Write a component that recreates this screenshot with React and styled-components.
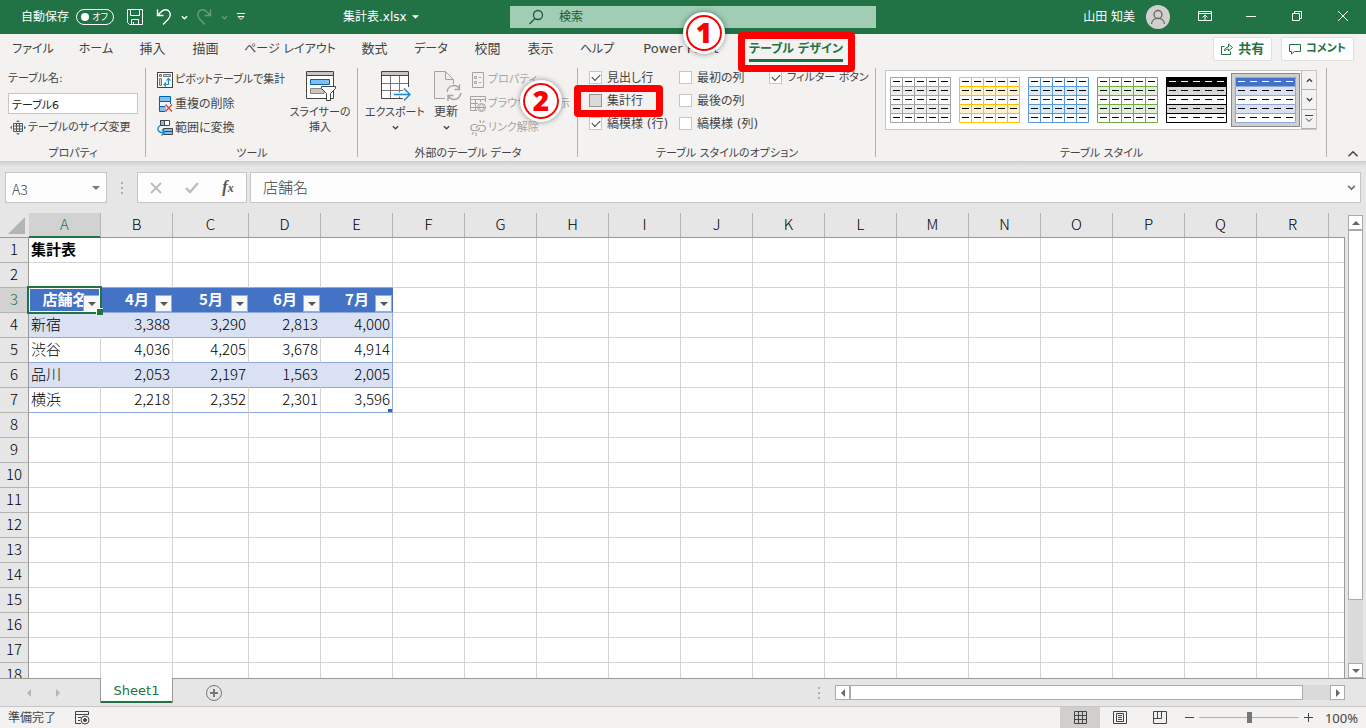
import { useState } from 'react';
import styled, { createGlobalStyle, css } from 'styled-components';

const tabs = [
  { name: 'ファイル', width: 66, kana: true },
  { name: 'ホーム', width: 60, kana: true },
  { name: '挿入', width: 53 },
  { name: '描画', width: 53 },
  { name: 'ページ レイアウト', width: 116, kana: true },
  { name: '数式', width: 53 },
  { name: 'データ', width: 60, kana: true },
  { name: '校閲', width: 53 },
  { name: '表示', width: 53 },
  { name: 'ヘルプ', width: 60, kana: true },
  { name: 'Power Pivot', width: 108 },
  { name: 'テーブル デザイン', width: 122, kana: true, active: true, step: '1' },
];

const options = [
  { id: 'header', name: '見出し行', on: true },
  { id: 'first', name: '最初の列', on: false },
  { id: 'filter', name: 'フィルター ボタン', on: true, kana: true },
  { id: 'total', name: '集計行', on: false, step: '2' },
  { id: 'last', name: '最後の列', on: false },
  { id: 'bandRow', name: '縞模様 (行)', on: true, newLine: true },
  { id: 'bandCol', name: '縞模様 (列)', on: false },
];

const tableStyles = [
  { name: '白', line: '#a5a5a5', head: '#fff', band: '#ededed', grid: true },
  { name: 'ゴールド', line: '#ffc000', head: '#fff', band: '#fff2cc', grid: true },
  { name: '青', line: '#5b9bd5', head: '#fff', band: '#ddebf7', grid: true },
  { name: '緑', line: '#70ad47', head: '#fff', band: '#e2efda', grid: true },
  { name: '黒', line: '#000', head: '#000', band: '#d9d9d9' },
  { name: '濃い青', line: '#8ea9db', head: '#4472c4', band: '#d9e1f2', selected: true },
];

// the last column has no letter, it fills the rest of the sheet
const columns = [...'ABCDEFGHIJKLMNOPQR'.split(''), ''];
const rowNumbers = Array.from({ length: 18 }, (_, i) => i + 1);

const cells = {
  1: ['集計表'],
  3: ['店舗名', '4月', '5月', '6月', '7月'],
  4: ['新宿', '3,388', '3,290', '2,813', '4,000'],
  5: ['渋谷', '4,036', '4,205', '3,678', '4,914'],
  6: ['品川', '2,053', '2,197', '1,563', '2,005'],
  7: ['横浜', '2,218', '2,352', '2,301', '3,596'],
};

const Chevron = ({ up, size = 7 }) => (
  <svg width={size} height={size} viewBox='0 0 8 8' fill='none' stroke='currentColor' strokeWidth={size > 9 ? 1 : 1.5}>
    <path d={up ? 'M1 5.5L4 2.5L7 5.5' : 'M1 2.5L4 5.5L7 2.5'} />
  </svg>
);

const Arrow = ({ dir = 'down' }) => {
  const paths = {
    down: 'M0 2H8L4 6Z',
    up: 'M0 6H8L4 2Z',
    left: 'M6 0V8L2 4Z',
    right: 'M2 0V8L6 4Z',
  };
  return (
    <svg width='8' height='8' viewBox='0 0 8 8' fill='currentColor'>
      <path d={paths[dir]} />
    </svg>
  );
};

const SaveIcon = () => (
  <svg width='16' height='18' viewBox='0 0 16 18' fill='none' stroke='#fff'>
    <path d='M.5 1.5H15.5V16.5H2.5L.5 14.5Z' />
    <path d='M3.5 1.5V7.5H12.5V1.5M4.5 16.5V11.5H11.5V16.5M6.5 16V14' />
  </svg>
);

const UndoIcon = ({ flip }) => (
  <svg width='16' height='18' viewBox='0 0 16 18' fill='none' stroke='#fff' strokeWidth='1.4'>
    <path
      transform={flip ? 'matrix(-1 0 0 1 16 0)' : undefined}
      d='M1.5 1.5V7.5H7.5M1.5 7.5L5.5 3.5C8 1 12 1.2 13.5 4C15 7 14 9.5 12 11.5L7 16.5'
    />
  </svg>
);

const PivotIcon = () => (
  <svg width='16' height='16' viewBox='0 0 16 16' fill='none'>
    <rect x='.5' y='.5' width='15' height='15' fill='#fff' stroke='#444' />
    <path d='M2.5 2.5H4.5V4.5H2.5ZM6.5 2.5H13.5V4.5H6.5ZM2.5 6.5H4.5V13.5H2.5Z' stroke='#777' fill='#d5d5d5' />
    <path d='M11.5 7V12.5H7.5M9.5 8.5L11.5 6.5L13.5 8.5M9 10.5L7 12.5L9 14.5' stroke='#1e8bcd' strokeWidth='1.2' />
  </svg>
);

const DuplicateIcon = () => (
  <svg width='16' height='16' viewBox='0 0 16 16' fill='none'>
    <path d='M2.5 .5H13.5V5H2.5ZM2.5 10H9V15.5H2.5Z' fill='#83beec' />
    <path d='M13.5 8V.5H2.5V15.5H8M2.5 5.5H13.5M2.5 10.5H8' stroke='#0063b1' />
    <path d='M8.5 8.5L15 15.5M15 8.5L8.5 15.5' stroke='#e8433f' strokeWidth='1.4' />
  </svg>
);

const RangeIcon = () => (
  <svg width='16' height='16' viewBox='0 0 16 16' fill='none'>
    <path d='M3.5 .5H12.5V5.5H3.5Z' fill='#fff' stroke='#444' />
    <path d='M3.5 .5H7.5V5.5H3.5Z' fill='#83beec' stroke='#444' />
    <path d='M6.5 8.5H15.5V14.5H6.5Z' fill='#83beec' stroke='#444' />
    <path d='M7 11.5H15' stroke='#444' />
    <path d='M3 5.5C0 8 0 11 4 12.5H7M5 9.5L7.5 12.5L4.5 15.5' stroke='#1e8bcd' strokeWidth='1.4' />
  </svg>
);

const ResizeIcon = () => (
  <svg width='16' height='16' viewBox='0 0 16 16' fill='none'>
    <path d='M3.5 3.5H12.5V11.5H3.5ZM3.5 6H12.5M3.5 9H12.5M6.5 3.5V11.5M9.5 3.5V11.5' stroke='#555' />
    <path d='M8 0L10 2H6ZM8 15L6 13H10ZM0 7.5L2 5.5V9.5ZM16 7.5L14 9.5V5.5Z' fill='#1e8bcd' />
  </svg>
);

const SlicerIcon = () => (
  <svg width='32' height='32' viewBox='0 0 32 32' fill='none'>
    <path d='M2.5 1.5H29.5V28.5H2.5Z' fill='#fff' stroke='#444' />
    <path d='M3 2H29V5H3Z' fill='#c8c6c4' />
    <path d='M2.5 5.5H29.5' stroke='#444' />
    <path d='M6.5 9.5H25.5V14.5H6.5Z' fill='#83beec' stroke='#0063b1' />
    <path d='M6.5 18.5H20V23.5H6.5Z' fill='#c8c6c4' stroke='#8a8886' />
    <path d='M17.5 16.5H31.5V18.5L26.5 23.5V30.5H22.5V23.5L17.5 18.5Z' fill='#fff' stroke='#444' />
  </svg>
);

const ExportIcon = () => (
  <svg width='32' height='32' viewBox='0 0 32 32' fill='none'>
    <path d='M2.5 1.5H29.5V28.5H2.5Z' fill='#fff' />
    <path d='M3 2H29V5H3Z' fill='#c8c6c4' />
    <path d='M11.5 5V28M20.5 5V28M3 13.5H29M3 20.5H29' stroke='#777' />
    <path d='M29.5 17V1.5H2.5V28.5H24M2.5 5.5H29.5' stroke='#444' />
    <path d='M14 24.5H31M25 18.5L31 24.5L25 30.5' stroke='#f3f2f1' strokeWidth='4' />
    <path d='M15 24.5H31M25 18.5L31 24.5L25 30.5' stroke='#1e8bcd' strokeWidth='1.4' />
  </svg>
);

const RefreshIcon = () => (
  <svg width='32' height='32' viewBox='0 0 32 32' fill='none' stroke='#a6a4a2'>
    <path d='M23.5 14V9.5L15.5 1.5H4.5V28.5H15M15.5 1.5V9.5H23.5' fill='#f0eeed' />
    <path
      d='M17 22C17.5 18 20.5 15.5 24 15.5C26.5 15.5 28.5 17 29.5 19M29.5 14.5V19.5H24.5M31 23C30 27 27.5 29.5 24 29.5C21.5 29.5 19.5 28 18 26M18 31V25.5H23.5'
      strokeWidth='1.4'
    />
  </svg>
);

const PropertyIcon = () => (
  <svg width='16' height='16' viewBox='0 0 16 16' fill='none' stroke='#a6a4a2'>
    <path d='M2.5 .5H13.5V15.5H2.5ZM4.5 4.5H6.5V6.5H4.5ZM4.5 9.5H6.5V11.5H4.5ZM9 5.5H11M9 10.5H11' />
  </svg>
);

const BrowserIcon = () => (
  <svg width='16' height='16' viewBox='0 0 16 16' fill='none' stroke='#a6a4a2'>
    <path d='M7 14.5H.5V.5H15.5V6M.5 3.5H15.5M.5 7.5H8M.5 11.5H7M5.5 3.5V14M10.5 3.5V6' />
    <circle cx='11.5' cy='11.5' r='4' />
    <path d='M7.5 11.5H15.5M11.5 7.5C9 10 9 13 11.5 15.5C14 13 14 10 11.5 7.5' />
  </svg>
);

const UnlinkIcon = () => (
  <svg width='16' height='16' viewBox='0 0 16 16' fill='none' stroke='#a6a4a2' strokeWidth='1.2'>
    <path d='M9.5 11.5H12.5C16.5 11 16.5 5.5 12.5 5.5H9C7 5.5 6.5 7 6.5 8.5M6.5 4.5H3.5C0 5 0 10.5 3.5 10.5H6.5C8.5 10.5 9.5 9 9.5 7.5M10.5 3L10 0M12.5 3L14.5 .5M3.5 12L2 14.5M6 12.5V16' />
  </svg>
);

const StyleThumb = ({ look }) => (
  <svg width='61' height='46' viewBox='0 0 61 46' fill='none'>
    <rect width='61' height='46' fill='#fff' />
    <path d='M0 0H61V9H0Z' fill={look.head} />
    <path d='M0 9H61V18H0ZM0 27H61V36H0Z' fill={look.band} />
    <path d='M.5 .5H60.5V45.5H.5ZM0 9.5H61M0 18.5H61M0 27.5H61M0 36.5H61' stroke={look.line} />
    {look.grid && <path d='M12.5 0V46M24.5 0V46M36.5 0V46M48.5 0V46' stroke={look.line} />}
    {[0, 1, 2, 3, 4].map((i) => (
      <path
        key={i}
        d={`M3 ${4.5 + i * 9}H10M15 ${4.5 + i * 9}H22M27 ${4.5 + i * 9}H34M39 ${4.5 + i * 9}H46M51 ${4.5 + i * 9}H58`}
        stroke={i === 0 && !look.grid ? '#fff' : '#000'}
      />
    ))}
  </svg>
);

const App = () => {
  const [checked, setChecked] = useState(options.filter((el) => el.on).map((el) => el.id));
  const [zoom, setZoom] = useState(100);

  const onToggle = (id) => {
    setChecked(checked.includes(id) ? checked.filter((el) => el !== id) : [...checked, id]);
  };

  return (
    <Window>
      <GlobalStyle />
      <TitleBar>
        <QuickAccess>
          <AutoSave>
            自動保存
            <Toggle type='button' role='switch' aria-checked='false'>
              <i />
              オフ
            </Toggle>
          </AutoSave>
          <IconButton type='button' aria-label='上書き保存' $w={26}><SaveIcon /></IconButton>
          <IconButton type='button' aria-label='元に戻す' $w={32}><UndoIcon /></IconButton>
          <IconButton type='button' aria-label='元に戻す一覧' $w={8}><Chevron /></IconButton>
          <IconButton type='button' aria-label='やり直し' $w={32} disabled><UndoIcon flip /></IconButton>
          <IconButton type='button' aria-label='やり直し一覧' $w={8} disabled><Chevron /></IconButton>
          <IconButton type='button' aria-label='ツールバーの設定' $w={26}>
            <svg width='8' height='8' viewBox='0 0 8 8' fill='none' stroke='#fff'>
              <path d='M0 .5H8M1 3.5L4 6.5L7 3.5Z' />
            </svg>
          </IconButton>
          <FileName type='button'>集計表.xlsx <Arrow /></FileName>
        </QuickAccess>
        <Search>
          <svg width='16' height='16' viewBox='0 0 16 16' fill='none' stroke='#185c37' strokeWidth='1.3'>
            <circle cx='10' cy='6' r='4.5' />
            <path d='M7 9.5L1.5 15' />
          </svg>
          <input type='text' aria-label='検索' placeholder='検索' />
        </Search>
        <Account>
          山田 知美
          <svg width='24' height='24' viewBox='0 0 24 24' fill='none' stroke='#666' strokeWidth='1.3'>
            <circle cx='12' cy='12' r='12' fill='#d2d0ce' stroke='none' />
            <circle cx='12' cy='9.5' r='4' />
            <path d='M5.5 19C6 11.5 18 11.5 18.5 19' />
          </svg>
        </Account>
        <IconButton type='button' aria-label='リボンの表示オプション' $w={46}>
          <svg width='14' height='12' viewBox='0 0 14 12' fill='none' stroke='#fff'>
            <path d='M.5 1.5H13.5V10.5H.5ZM.5 3.5H13.5M7 10V5M4.5 7.5L7 5L9.5 7.5' />
          </svg>
        </IconButton>
        <IconButton type='button' aria-label='最小化' $w={46}>
          <svg width='10' height='10' viewBox='0 0 10 10' stroke='#fff'><path d='M0 5.5H10' /></svg>
        </IconButton>
        <IconButton type='button' aria-label='元に戻す (縮小)' $w={46}>
          <svg width='10' height='10' viewBox='0 0 10 10' fill='none' stroke='#fff'>
            <path d='M.5 2.5H7.5V9.5H.5ZM2.5 2V.5H9.5V7.5H8' />
          </svg>
        </IconButton>
        <IconButton type='button' aria-label='閉じる' $w={46}>
          <svg width='10' height='10' viewBox='0 0 10 10' stroke='#fff'><path d='M0 0L10 10M10 0L0 10' /></svg>
        </IconButton>
      </TitleBar>

      <TabBar>
        {tabs.map((tab) => (
          <Tab key={tab.name} type='button' $w={tab.width} $kana={tab.kana} $active={tab.active}>
            <span>{tab.name}</span>
            {tab.step && <TabFrame />}
            {tab.step && <TabStep>{tab.step}</TabStep>}
          </Tab>
        ))}
        <TabActions>
          <ShareButton type='button'>
            <svg width='12' height='12' viewBox='0 0 12 12' fill='none' stroke='#217346'>
              <path d='M3.5 3.5H.5V11.5H9.5V8.5M3.5 8C3.5 5.5 5 4 7.5 4V1L11.5 4.5L7.5 8V6C5.5 6 4.5 6.5 3.5 8Z' />
            </svg>
            共有
          </ShareButton>
          <ShareButton type='button' $kana>
            <svg width='12' height='12' viewBox='0 0 12 12' fill='none' stroke='#217346'>
              <path d='M.5 1.5H11.5V8.5H5.5L2.5 11V8.5H.5Z' />
            </svg>
            コメント
          </ShareButton>
        </TabActions>
      </TabBar>

      <Ribbon>
        <Group $w={146}>
          <PropertyBody>
            <label htmlFor='table-name'>テーブル名:</label>
            <input id='table-name' defaultValue='テーブル6' />
            <SmallButton type='button' $kana><ResizeIcon />テーブルのサイズ変更</SmallButton>
          </PropertyBody>
          <GroupName>プロパティ</GroupName>
        </Group>

        <Group $w={212}>
          <GroupBody>
            <SmallColumn $left={11}>
              <SmallButton type='button' $kana><PivotIcon />ピボットテーブルで集計</SmallButton>
              <SmallButton type='button'><DuplicateIcon />重複の削除</SmallButton>
              <SmallButton type='button'><RangeIcon />範囲に変換</SmallButton>
            </SmallColumn>
            <BigButton type='button' $w={76} $kana>
              <SlicerIcon />
              <span>スライサーの<br />挿入</span>
            </BigButton>
          </GroupBody>
          <GroupName>ツール</GroupName>
        </Group>

        <Group $w={220}>
          <GroupBody>
            <BigButton type='button' $w={74} $kana>
              <ExportIcon />
              <span>エクスポート</span>
              <Chevron />
            </BigButton>
            <BigButton type='button' $w={28}>
              <RefreshIcon />
              <span>更新</span>
              <Chevron />
            </BigButton>
            <SmallColumn $left={10}>
              <SmallButton type='button' $kana disabled><PropertyIcon />プロパティ</SmallButton>
              <SmallButton type='button' $kana disabled><BrowserIcon />ブラウザーで表示</SmallButton>
              <SmallButton type='button' $kana disabled><UnlinkIcon />リンク解除</SmallButton>
            </SmallColumn>
          </GroupBody>
          <GroupName>外部のテーブル データ</GroupName>
        </Group>

        <Group $w={298}>
          <OptionGrid>
            {options.map((el) => (
              <Option key={el.id} $newLine={el.newLine} $marked={el.step} $kana={el.kana}>
                <input type='checkbox' checked={checked.includes(el.id)} onChange={() => onToggle(el.id)} />
                {el.name}
                {el.step && <OptionFrame />}
                {el.step && <OptionStep>{el.step}</OptionStep>}
              </Option>
            ))}
          </OptionGrid>
          <GroupName>テーブル スタイルのオプション</GroupName>
        </Group>

        <Group $grow>
          <GroupBody>
            <Gallery>
              {tableStyles.map((look) => (
                <StyleButton key={look.name} type='button' aria-label={look.name} $selected={look.selected}>
                  <StyleThumb look={look} />
                </StyleButton>
              ))}
              <GalleryNav>
                <button type='button' aria-label='前の行'><Chevron up /></button>
                <button type='button' aria-label='次の行'><Chevron /></button>
                <button type='button' aria-label='その他'>
                  <svg width='8' height='8' viewBox='0 0 8 8' fill='none' stroke='currentColor'>
                    <path d='M0 .5H8M1 3.5L4 6.5L7 3.5' />
                  </svg>
                </button>
              </GalleryNav>
            </Gallery>
          </GroupBody>
          <GroupName>テーブル スタイル</GroupName>
        </Group>
        <Collapse type='button' aria-label='リボンを折りたたむ'><Chevron up size={12} /></Collapse>
      </Ribbon>

      <FormulaBar>
        <NameBox>
          <input aria-label='名前ボックス' defaultValue='A3' />
          <button type='button' aria-label='名前の一覧'><Arrow /></button>
        </NameBox>
        <Dots><i /><i /><i /></Dots>
        <FormulaButtons>
          <button type='button' aria-label='キャンセル'>
            <svg width='12' height='12' viewBox='0 0 12 12' stroke='#bcbcbc' strokeWidth='2'><path d='M1 1L11 11M11 1L1 11' /></svg>
          </button>
          <button type='button' aria-label='入力'>
            <svg width='14' height='12' viewBox='0 0 14 12' fill='none' stroke='#bcbcbc' strokeWidth='2.4'><path d='M1 6L5 10L13 1' /></svg>
          </button>
          <button type='button' aria-label='関数の挿入'><em>f<small>x</small></em></button>
        </FormulaButtons>
        <FormulaInput>
          <input aria-label='数式バー' defaultValue='店舗名' />
          <button type='button' aria-label='数式バーの展開'><Chevron size={9} /></button>
        </FormulaInput>
      </FormulaBar>

      <Main>
        <SheetView>
          <Sheet>
            <colgroup>
              <Col $w={29} />
              {columns.map((name) => <Col key={name} $w={name === 'C' ? 76 : name && 72} />)}
            </colgroup>
            <thead>
              <tr>
                <Corner aria-label='すべて選択'>
                  <svg width='17' height='17' viewBox='0 0 17 17'><path d='M17 0V17H0Z' fill='#b4b4b4' /></svg>
                </Corner>
                {columns.map((name) => <ColHead key={name} $selected={name === 'A'}>{name}</ColHead>)}
              </tr>
            </thead>
            <tbody>
              {rowNumbers.map((row) => (
                <tr key={row}>
                  <RowHead $selected={row === 3}>{row}</RowHead>
                  {columns.map((name, i) => {
                    const inTable = row > 2 && row < 8 && i < 5;
                    const text = cells[row]?.[i];
                    if (row === 3 && inTable) {
                      return (
                        <HeadCell key={name}>
                          {text}
                          <FilterButton type='button' aria-label={`${text}のフィルター`}><Arrow /></FilterButton>
                          {i === 0 && <Cursor />}
                        </HeadCell>
                      );
                    }
                    return (
                      <Cell
                        key={name}
                        $title={row === 1 && i === 0}
                        $number={i > 0}
                        $band={inTable && row % 2 === 0}
                        $lined={inTable || (row === 2 && i < 5)}
                        $edge={inTable && i === 4}
                        $corner={row === 7 && i === 4}
                      >
                        {text}
                      </Cell>
                    );
                  })}
                </tr>
              ))}
            </tbody>
          </Sheet>
        </SheetView>
        <VerticalScroll>
          <ScrollButton type='button' aria-label='上へ'><Arrow dir='up' /></ScrollButton>
          <VerticalThumb />
          <ScrollButton type='button' aria-label='下へ'><Arrow dir='down' /></ScrollButton>
        </VerticalScroll>
      </Main>

      <SheetBar>
        <SheetNav>
          <button type='button' aria-label='前のシート'><Arrow dir='left' /></button>
          <button type='button' aria-label='次のシート'><Arrow dir='right' /></button>
        </SheetNav>
        <SheetTab type='button'>Sheet1</SheetTab>
        <AddSheet type='button' aria-label='新しいシート'>
          <svg width='16' height='16' viewBox='0 0 16 16' fill='none' stroke='#777'>
            <circle cx='8' cy='8' r='7.5' />
            <path d='M8 4V12M4 8H12' strokeWidth='2' />
          </svg>
        </AddSheet>
        <BarDots><i /><i /><i /></BarDots>
        <HorizontalScroll>
          <ScrollButton type='button' aria-label='左へ'><Arrow dir='left' /></ScrollButton>
          <HorizontalThumb />
          <ScrollButton type='button' aria-label='右へ'><Arrow dir='right' /></ScrollButton>
        </HorizontalScroll>
      </SheetBar>

      <StatusBar>
        <Status>準備完了</Status>
        <svg width='15' height='14' viewBox='0 0 15 14' fill='none' stroke='#444'>
          <path d='M6 12.5H.5V.5H13.5V4M.5 3.5H13.5M3 6.5H6M3 9.5H5' />
          <circle cx='10' cy='9' r='4' />
          <circle cx='10' cy='9' r='1.5' fill='#444' />
        </svg>
        <Views>
          <ViewButton type='button' aria-label='標準' $active>
            <svg width='13' height='13' viewBox='0 0 13 13' fill='none' stroke='#444'>
              <path d='M.5 .5H12.5V12.5H.5ZM.5 4.5H12.5M.5 8.5H12.5M4.5 .5V12.5M8.5 .5V12.5' />
            </svg>
          </ViewButton>
          <ViewButton type='button' aria-label='ページ レイアウト'>
            <svg width='14' height='13' viewBox='0 0 14 13' fill='none' stroke='#444'>
              <path d='M.5 .5H13.5V12.5H.5ZM3.5 2.5H10.5V10.5H3.5ZM5 4.5H9M5 6.5H9M5 8.5H9' />
            </svg>
          </ViewButton>
          <ViewButton type='button' aria-label='改ページ プレビュー'>
            <svg width='14' height='13' viewBox='0 0 14 13' fill='none' stroke='#444'>
              <path d='M.5 .5H13.5V12.5H.5ZM.5 7.5H8.5V.5M4.5 .5V7.5' />
            </svg>
          </ViewButton>
        </Views>
        <ZoomButton type='button' aria-label='縮小'>
          <svg width='9' height='9' viewBox='0 0 9 9' stroke='#444'><path d='M0 4.5H9' /></svg>
        </ZoomButton>
        <ZoomSlider
          type='range'
          aria-label='ズーム'
          min='0'
          max='200'
          value={zoom}
          onChange={(e) => setZoom(Number(e.target.value))}
        />
        <ZoomButton type='button' aria-label='拡大'>
          <svg width='9' height='9' viewBox='0 0 9 9' stroke='#444'><path d='M0 4.5H9M4.5 0V9' /></svg>
        </ZoomButton>
        <ZoomValue>{zoom}%</ZoomValue>
      </StatusBar>
    </Window>
  );
};
export default App;

const GlobalStyle = createGlobalStyle`
  * {
    box-sizing: border-box;
  }

  body {
    margin: 0;
    overflow: hidden;
  }

  button,
  input {
    margin: 0;
    padding: 0;
    border: 0;
    background: none;
    color: inherit;
    font: inherit;
    font-feature-settings: inherit;
    outline: none;
  }

  svg {
    display: block;
    flex: none;
  }
`;

const Window = styled.div`
  display: flex;
  flex-direction: column;
  height: 100vh;
  background: #e6e6e6;
  color: #444;
  font-family: 'DejaVu Sans', 'Noto Sans CJK JP', sans-serif;
  font-size: 12px;
  line-height: 16px;
  font-feature-settings: 'palt';
  white-space: nowrap;
`;

const TitleBar = styled.header`
  display: flex;
  flex: none;
  height: 34px;
  background: #217346;
  color: #fff;
`;

const QuickAccess = styled.div`
  display: flex;
  flex: none;
  align-items: center;
  width: 510px;
  padding-left: 21px;
`;

const AutoSave = styled.div`
  display: flex;
  align-items: center;
  gap: 7px;
  width: 101px;
`;

const Toggle = styled.button`
  display: flex;
  align-items: center;
  justify-content: space-between;
  width: 38px;
  height: 16px;
  padding: 0 5px 0 4px;
  border: 1px solid #fff;
  border-radius: 8px;
  font-size: 9px;

  i {
    width: 8px;
    height: 8px;
    border-radius: 50%;
    background: #fff;
  }
`;

const IconButton = styled.button`
  display: flex;
  flex: none;
  align-items: center;
  justify-content: center;
  width: ${({ $w }) => $w}px;
  height: 32px;

  &:disabled {
    opacity: 0.3;
  }
`;

const FileName = styled.button`
  display: flex;
  align-items: center;
  gap: 5px;
  margin-left: 89px;

  svg {
    width: 7px;
  }
`;

const Search = styled.label`
  display: flex;
  align-items: center;
  flex: 0 1 366px;
  height: 22px;
  margin-top: 6px;
  padding-left: 18px;
  gap: 15px;
  background: #a0cdb4;

  input {
    flex: 1;
    min-width: 0;
    color: #185c37;
  }

  input::placeholder {
    color: #185c37;
    opacity: 1;
  }
`;

const Account = styled.div`
  display: flex;
  align-items: center;
  gap: 11px;
  margin-left: auto;
  padding-right: 12px;
`;

const TabBar = styled.nav`
  display: flex;
  flex: none;
  height: 32px;
  background: #f3f2f1;
`;

const Tab = styled.button`
  position: relative;
  display: flex;
  flex: none;
  align-items: flex-start;
  justify-content: center;
  width: ${({ $w }) => $w}px;
  padding-top: 7px;
  font-size: ${({ $kana }) => ($kana ? 12 : 13)}px;

  ${({ $active }) => $active && css`
    color: #217346;
    font-weight: bold;

    > span:first-child {
      padding-bottom: 2px;
      border-bottom: 3px solid #217346;
    }
  `}
`;

const frame = css`
  position: absolute;
  z-index: 2;
  border: 7px solid #f00;
  border-radius: 4px;
  pointer-events: none;
`;

const step = css`
  position: absolute;
  z-index: 3;
  width: 36px;
  height: 36px;
  border: 2px solid #f00;
  border-radius: 50%;
  outline: 3px solid #fff;
  background: #fff;
  box-shadow: 0 0 5px 4px rgba(0, 0, 0, 0.3);
  color: #f00;
  font-family: 'Open Sans', sans-serif;
  font-size: 28px;
  font-weight: 800;
  line-height: 31px;
  text-align: center;
`;

const TabFrame = styled.span`
  ${frame}
  top: -2px;
  left: 3px;
  width: 117px;
  height: 40px;
`;

const TabStep = styled.span`
  ${step}
  top: -19px;
  left: -49px;
`;

const TabActions = styled.div`
  display: flex;
  gap: 9px;
  margin-left: auto;
  padding: 3px 12px 5px 0;
`;

const ShareButton = styled.button`
  display: flex;
  align-items: center;
  gap: 5px;
  padding: 0 7px;
  border: 1px solid #e1dfdd;
  border-radius: 2px;
  background: #fff;
  color: #217346;
  font-size: ${({ $kana }) => ($kana ? 11 : 13)}px;
  font-weight: bold;
`;

const Ribbon = styled.section`
  display: flex;
  flex: none;
  height: 95px;
  background: #f3f2f1;
`;

const Group = styled.div`
  position: relative;
  flex: ${({ $grow, $w }) => ($grow ? '1' : `0 0 ${$w}px`)};
  min-width: 0;

  &::after {
    content: '';
    position: absolute;
    top: 2px;
    right: 0;
    width: 1px;
    height: 89px;
    background: #b3b0ad;
  }
`;

const GroupBody = styled.div`
  display: flex;
  height: 74px;
  padding-top: 2px;
`;

const GroupName = styled.div`
  margin-top: 6px;
  font-size: 11px;
  text-align: center;
`;

const PropertyBody = styled.div`
  display: flex;
  flex-direction: column;
  height: 74px;
  padding: 5px 8px 0;
  font-size: 11px;

  label {
    margin-bottom: 6px;
  }

  input {
    width: 130px;
    height: 21px;
    padding: 0 3px;
    border: 1px solid #c8c6c4;
    background: #fff;
    color: #222;
  }
`;

const SmallColumn = styled.div`
  flex: 1;
  min-width: 0;
  padding-left: ${({ $left }) => $left}px;
`;

const SmallButton = styled.button`
  display: flex;
  align-items: center;
  height: 24px;
  gap: 2px;
  font-size: ${({ $kana }) => ($kana ? 11 : 12)}px;

  &:disabled {
    color: #a6a4a2;
  }

  ${PropertyBody} & {
    margin: 2px 0 0 2px;
  }
`;

const BigButton = styled.button`
  display: flex;
  flex: none;
  flex-direction: column;
  align-items: center;
  width: ${({ $w }) => $w}px;
  padding-top: 2px;
  font-size: ${({ $kana }) => ($kana ? 11 : 12)}px;
  line-height: 15px;

  > span {
    margin: 3px 0 4px;
  }
`;

const OptionGrid = styled.div`
  display: grid;
  grid-template-columns: 90px 90px auto;
  grid-template-rows: repeat(3, 23px);
  height: 74px;
  padding-left: 11px;
`;

const Option = styled.label`
  position: relative;
  display: flex;
  align-items: center;
  gap: 5px;
  font-size: ${({ $kana }) => ($kana ? 11 : 12)}px;
  ${({ $newLine }) => $newLine && 'grid-column: 1;'}

  input {
    appearance: none;
    display: grid;
    place-items: center;
    width: 13px;
    height: 13px;
    border: 1px solid ${({ $marked }) => ($marked ? '#979593' : '#c8c6c4')};
    background: ${({ $marked }) => ($marked ? '#dcdad8' : '#fff')};
  }

  input:checked::after {
    content: '';
    width: 7px;
    height: 4px;
    margin-top: -2px;
    border: solid #333;
    border-width: 0 0 1px 1px;
    transform: rotate(-45deg);
  }
`;

const OptionFrame = styled.span`
  ${frame}
  top: -4px;
  left: -15px;
  width: 89px;
  height: 32px;
`;

const OptionStep = styled.span`
  ${step}
  top: -6px;
  left: -66px;
`;

const Gallery = styled.div`
  display: flex;
  height: 60px;
  margin: 2px 0 0 9px;
  border: 1px solid #c8c6c4;
  background: #fff;
`;

const StyleButton = styled.button`
  width: 69px;
  height: 54px;
  margin-top: 2px;
  padding: 4px;
  ${({ $selected }) => $selected && css`
    background: #cfcfcf;
    box-shadow: inset 0 0 0 1px #8a8886;
  `}
`;

const GalleryNav = styled.div`
  display: grid;
  grid-template-rows: repeat(3, 1fr);
  width: 15px;
  margin-left: 1px;

  button {
    display: grid;
    place-items: center;
    border-left: 1px solid #b3b0ad;
    border-bottom: 1px solid #b3b0ad;
    background: #f3f2f1;
  }
`;

const Collapse = styled.button`
  display: flex;
  flex: none;
  align-items: flex-end;
  width: 39px;
  padding: 0 0 1px 20px;
`;

const FormulaBar = styled.section`
  display: flex;
  flex: none;
  height: 52px;
  padding: 11px 5px 10px;
  background: linear-gradient(#d0d0d0, #e6e6e6 6px);
  font-size: 14px;

  button {
    display: grid;
    place-items: center;
    color: #777;
  }
`;

const box = css`
  display: flex;
  border: 1px solid #c6c6c6;
  background: #fdfdfd;
`;

const NameBox = styled.div`
  ${box}
  width: 102px;
  font-family: 'Noto Sans CJK JP', sans-serif;
  font-weight: 300;

  input {
    flex: 1;
    min-width: 0;
    padding: 3px 0 0 6px;
  }

  button {
    width: 20px;
  }
`;

const Dots = styled.div`
  display: flex;
  flex-direction: column;
  align-items: center;
  justify-content: center;
  gap: 3px;
  width: 30px;

  i {
    width: 2px;
    height: 2px;
    background: #b0b0b0;
  }
`;

const FormulaButtons = styled.div`
  ${box}
  width: 110px;
  margin-right: 3px;

  button {
    width: 36px;
  }

  em {
    color: #555;
    font-family: 'Liberation Serif', serif;
    font-size: 16px;
    font-weight: bold;
  }

  small {
    font-size: 12px;
  }
`;

const FormulaInput = styled.div`
  ${box}
  flex: 1;
  font-family: 'Noto Sans CJK JP', sans-serif;
  font-size: 15px;
  font-weight: 300;

  input {
    flex: 1;
    min-width: 0;
    padding: 0 0 2px 12px;
  }

  button {
    width: 17px;
  }
`;

const Main = styled.main`
  display: flex;
  flex: 1;
  min-height: 0;
`;

const SheetView = styled.div`
  position: relative;
  flex: 1;
  min-width: 0;
  overflow: hidden;

  &::after {
    content: '';
    position: absolute;
    top: 24px;
    right: 0;
    bottom: 0;
    width: 1px;
    background: #999;
  }
`;

const Sheet = styled.table`
  table-layout: fixed;
  width: 100%;
  border-collapse: separate;
  border-spacing: 0;
  color: #000;
  font-family: 'Noto Sans CJK JP', sans-serif;
  font-size: 15px;
  font-weight: 300;
  line-height: 22px;

  th,
  td {
    height: 25px;
    padding: 0 2px 2px;
  }
`;

const Col = styled.col`
  width: ${({ $w }) => ($w ? `${$w}px` : 'auto')};
`;

const Corner = styled.td`
  border-bottom: 1px solid #999;

  svg {
    margin: 3px 0 0 6px;
  }
`;

const ColHead = styled.th`
  border-right: 1px solid #b4b4b4;
  border-bottom: 1px solid #999;
  font-weight: 300;

  &:last-child {
    border-right: 0;
  }

  ${({ $selected }) => $selected && css`
    background: #d2d2d2;
    box-shadow: inset 0 -1px #217346;
    border-bottom-color: #217346;
    color: #217346;
  `}
`;

const RowHead = styled.th`
  border-right: 1px solid #999;
  border-bottom: 1px solid #b4b4b4;
  font-weight: 300;

  ${({ $selected }) => $selected && css`
    background: #d2d2d2;
    color: #217346;
  `}
`;

const Cell = styled.td`
  background: ${({ $band }) => ($band ? '#d9e1f2' : '#fff')};
  border-right: 1px solid ${({ $band, $edge }) => ($edge ? '#8ea9db' : $band ? '#d9e1f2' : '#d4d4d4')};
  border-bottom: 1px solid ${({ $lined }) => ($lined ? '#8ea9db' : '#d4d4d4')};
  font-weight: ${({ $title }) => ($title ? 'bold' : 300)};
  text-align: ${({ $number }) => ($number ? 'right' : 'left')};

  ${({ $corner }) => $corner && css`
    background: linear-gradient(#3f5fbf, #3f5fbf) right bottom / 4px 3px no-repeat #fff;
  `}
`;

const HeadCell = styled.th`
  position: relative;
  border-bottom: 1px solid #8ea9db;
  background: #4472c4;
  color: #fff;
  font-weight: bold;
`;

const FilterButton = styled.button`
  position: absolute;
  right: 1px;
  bottom: 0;
  display: grid;
  place-items: center;
  width: 17px;
  height: 17px;
  border: 1px solid #ababab;
  background: #f8f8f8;
  color: #555;
`;

const Cursor = styled.span`
  position: absolute;
  z-index: 1;
  inset: -2px -1px -2px -2px;
  border: 2px solid #217346;
  box-shadow: inset 0 0 0 1px #fff;
  pointer-events: none;

  &::after {
    content: '';
    position: absolute;
    right: -3px;
    bottom: -3px;
    width: 6px;
    height: 6px;
    border: solid #fff;
    border-width: 1px 0 0 1px;
    background: #217346;
  }
`;

const VerticalScroll = styled.div`
  display: flex;
  flex: none;
  flex-direction: column;
  width: 15px;
  margin: 2px 3px 0;
  background: #dadada;
`;

const ScrollButton = styled.button`
  display: grid;
  flex: none;
  place-items: center;
  width: 15px;
  height: 15px;
  border: 1px solid #ababab;
  background: #fff;
  color: #666;
`;

const VerticalThumb = styled.div`
  flex: 0 1 80%;
  margin-bottom: auto;
  border: 1px solid #ababab;
  background: #fff;
`;

const SheetBar = styled.footer`
  display: flex;
  flex: none;
  align-items: center;
  height: 28px;
  border-top: 1px solid #999;
`;

const SheetNav = styled.div`
  display: flex;
  width: 100px;
  gap: 21px;
  padding-left: 25px;
  color: #b4b4b4;
`;

const SheetTab = styled.button`
  align-self: flex-start;
  width: 73px;
  height: 25px;
  margin-top: -1px;
  border: solid #999;
  border-width: 0 1px;
  box-shadow: inset 0 -2px #217346;
  background: #fff;
  color: #217346;
  font-size: 13px;
`;

const AddSheet = styled.button`
  margin-left: 33px;
`;

const BarDots = styled(Dots)`
  margin-left: auto;
  width: 32px;
`;

const HorizontalScroll = styled.div`
  display: flex;
  flex: 0 1 510px;
  margin-right: 21px;
  background: #dadada;
`;

const HorizontalThumb = styled.div`
  flex: 0 1 453px;
  margin-right: auto;
  border: 1px solid #ababab;
  background: #fff;
`;

const StatusBar = styled.footer`
  display: flex;
  flex: none;
  align-items: center;
  height: 22px;
  padding-right: 8px;
  border-top: 1px solid #c6c6c6;
  background: #f3f2f1;
`;

const Status = styled.span`
  width: 75px;
  padding-left: 8px;
`;

const Views = styled.div`
  display: flex;
  margin-left: auto;
`;

const ViewButton = styled.button`
  display: grid;
  place-items: center;
  width: 40px;
  height: 21px;
  background: ${({ $active }) => ($active ? '#d0cfce' : 'none')};
`;

const ZoomButton = styled.button`
  display: grid;
  place-items: center;
  width: 19px;
`;

const ZoomSlider = styled.input`
  appearance: none;
  width: 100px;
  height: 11px;
  background: linear-gradient(#b0b0b0, #b0b0b0) center / 100% 1px no-repeat;

  &::-webkit-slider-thumb {
    appearance: none;
    width: 5px;
    height: 11px;
    background: #777;
  }
`;

const ZoomValue = styled.span`
  width: 40px;
  font-family: 'Noto Sans', sans-serif;
  font-size: 13px;
  line-height: 18px;
  text-align: right;
`;
